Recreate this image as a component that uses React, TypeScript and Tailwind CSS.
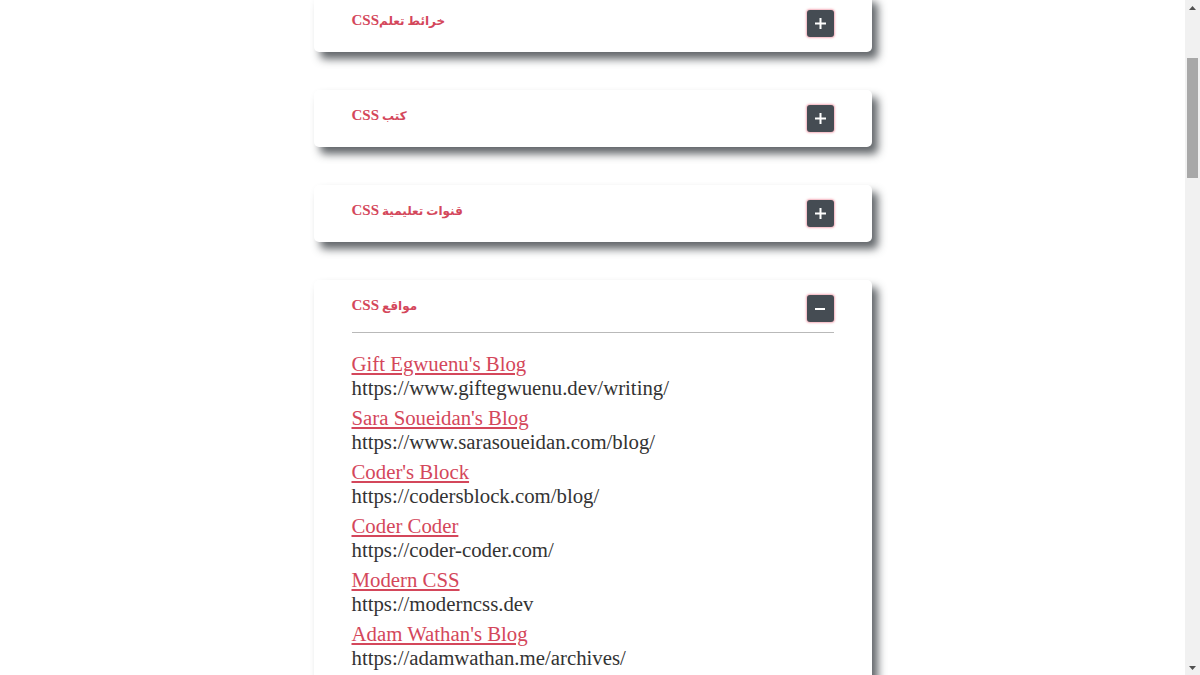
import React from "react";

const sites = [
  { name: "Gift Egwuenu's Blog", url: "https://www.giftegwuenu.dev/writing/" },
  { name: "Sara Soueidan's Blog", url: "https://www.sarasoueidan.com/blog/" },
  { name: "Coder's Block", url: "https://codersblock.com/blog/" },
  { name: "Coder Coder", url: "https://coder-coder.com/" },
  { name: "Modern CSS", url: "https://moderncss.dev" },
  { name: "Adam Wathan's Blog", url: "https://adamwathan.me/archives/" },
];

function ToggleButton({ open }: { open: boolean }) {
  return (
    <button className="w-[27px] h-[27px] shrink-0 rounded-[3px] bg-[#454c53] flex items-center justify-center shadow-[0_0_2px_1px_rgba(235,120,140,0.6)]">
      {open ? (
        <span className="block w-[10px] h-[2px] bg-white" />
      ) : (
        <svg width="11" height="11" viewBox="0 0 11 11">
          <rect x="4.5" y="0" width="2" height="11" fill="white" />
          <rect x="0" y="4.5" width="11" height="2" fill="white" />
        </svg>
      )}
    </button>
  );
}

function Card({ ar, en, open, children }: { ar: string; en: string; open?: boolean; children?: React.ReactNode }) {
  return (
    <div className="bg-white rounded-[5px] shadow-[6px_7px_9px_rgba(70,75,80,0.85)] px-[38px] pt-[15px] pb-[15px]">
      <div className="flex items-start justify-between">
        <h3
          dir="rtl"
          className="mt-[1px] text-[15px] leading-[18px] font-bold text-[#d4475b] text-left"
          style={{ fontFamily: '"Liberation Serif", "DejaVu Sans", serif' }}
        >
          <span className="text-[12px]">{ar}</span>
          {en}
        </h3>
        <ToggleButton open={!!open} />
      </div>
      {open && children}
    </div>
  );
}

function FakeScrollbar() {
  return (
    <div className="fixed right-0 top-0 h-[675px] w-[15px] bg-[#f1f1f1] flex flex-col items-center">
      <div className="h-[15px] flex items-center justify-center">
        <svg width="7" height="4" viewBox="0 0 7 4">
          <polygon points="3.5,0 7,4 0,4" fill="#505050" />
        </svg>
      </div>
      <div className="mt-[43px] w-[11px] h-[120px] bg-[#a8a8a8]" />
      <div className="flex-1" />
      <div className="h-[15px] flex items-center justify-center">
        <svg width="7" height="4" viewBox="0 0 7 4">
          <polygon points="0,0 7,0 3.5,4" fill="#505050" />
        </svg>
      </div>
    </div>
  );
}

export default function App() {
  return (
    <div className="h-[675px] overflow-hidden bg-white pr-[15px]" style={{ fontFamily: '"Liberation Serif", serif' }}>
      <div className="w-[558px] mx-auto -mt-[5px] flex flex-col gap-[38px]">
        <Card ar="خرائط تعلم" en="CSS" />
        <Card ar="كتب " en="CSS" />
        <Card ar="قنوات تعليمية " en="CSS" />
        <Card ar="مواقع " en="CSS" open>
          <div className="mt-[10px] border-t border-[#b9b9b9] pt-[19px]">
            <ul className="flex flex-col gap-[6px]">
              {sites.map((s) => (
                <li key={s.name} className="text-[20.8px] leading-[24px]">
                  <a href="#" className="text-[#d4475b] underline block w-fit">
                    {s.name}
                  </a>
                  <div className="text-[#333333]">{s.url}</div>
                </li>
              ))}
            </ul>
          </div>
        </Card>
      </div>
      <FakeScrollbar />
    </div>
  );
}
